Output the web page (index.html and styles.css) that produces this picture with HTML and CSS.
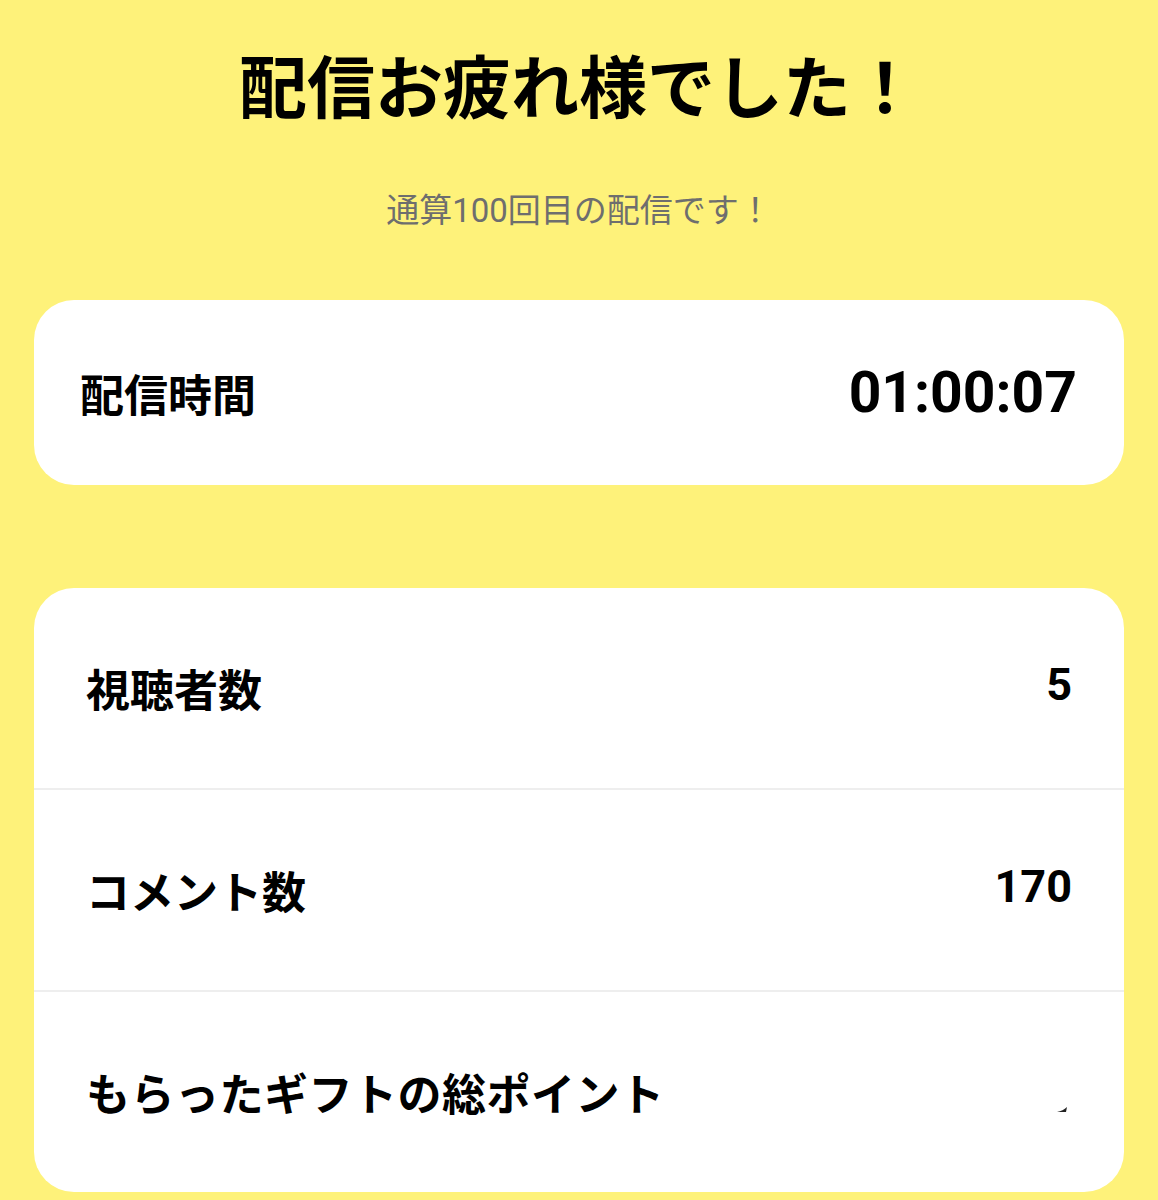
FILE: index.html
```html
<!DOCTYPE html>
<html lang="ja">
<head>
    <meta charset="UTF-8">
    <meta name="viewport" content="width=device-width, initial-scale=1.0">
    <title>配信お疲れ様でした！</title>
    <link rel="stylesheet" href="styles.css">
</head>
<body>
<div class="summary">
    <h1 class="summaryTitle">配信お疲れ様でした！</h1>
    <p class="summarySub">通算100回目の配信です！</p>

    <div class="card cardTime">
        <span class="label">配信時間</span>
        <span class="value timeValue">01:00:07</span>
    </div>

    <div class="card cardStats">
        <div class="row">
            <span class="label">視聴者数</span>
            <span class="value">5</span>
        </div>
        <div class="row">
            <span class="label">コメント数</span>
            <span class="value">170</span>
        </div>
        <div class="row">
            <span class="label">もらったギフトの総ポイント</span>
            <!-- value still loading -->
            <span class="value loading"><svg width="12" height="8" viewBox="0 0 12 8"><path d="M1 6 Q7 5 11 1 L10 6 Z" fill="#222"/></svg></span>
        </div>
    </div>
</div>
</body>
</html>
```

FILE: styles.css
```css
html, body {
    margin: 0;
    padding: 0;
}

body {
    background: #fef27a;
    font-family: Roboto, "Noto Sans CJK JP", sans-serif;
    color: #000000;
}

.summary {
    padding: 40px 34px 10px;
    display: flex;
    flex-direction: column;
}

.summaryTitle {
    margin: 0;
    text-align: center;
    font-size: 68px;
    font-weight: 700;
    line-height: 100px;
}

.summarySub {
    margin: 47px 0 0;
    text-align: center;
    font-size: 33px;
    line-height: 48px;
    color: #6e6e6e;
}

/* cards */
.card {
    background: #ffffff;
    border-radius: 40px;
}

.cardTime {
    margin-top: 65px;
    height: 185px;
    padding: 0 47px 0 46px;
    display: flex;
    align-items: center;
    justify-content: space-between;
}

.label {
    font-size: 44px;
    font-weight: 700;
    line-height: 1.2;
}

.value {
    font-size: 45px;
    font-weight: 700;
    line-height: 1.2;
}

.cardTime .label {
    margin-top: 9px;
}

.timeValue {
    font-size: 57px;
    margin-top: 2px;
}

.cardStats {
    margin-top: 103px;
    display: flex;
    flex-direction: column;
}

.cardStats .row {
    height: 200px;
    padding: 0 52px;
    display: flex;
    align-items: center;
    justify-content: space-between;
    border-bottom: 2px solid #eeeeee;
}

.cardStats .row:last-child {
    border-bottom: 0;
}

.cardStats .row .label {
    margin-top: 8px;
}

.cardStats .row:last-child .label {
    letter-spacing: 0.5px;
}

.cardStats .row .value {
    margin-top: -6px;
}

.cardStats .row .loading {
    display: flex;
    margin: 36px 4px 0 0;
}
```
